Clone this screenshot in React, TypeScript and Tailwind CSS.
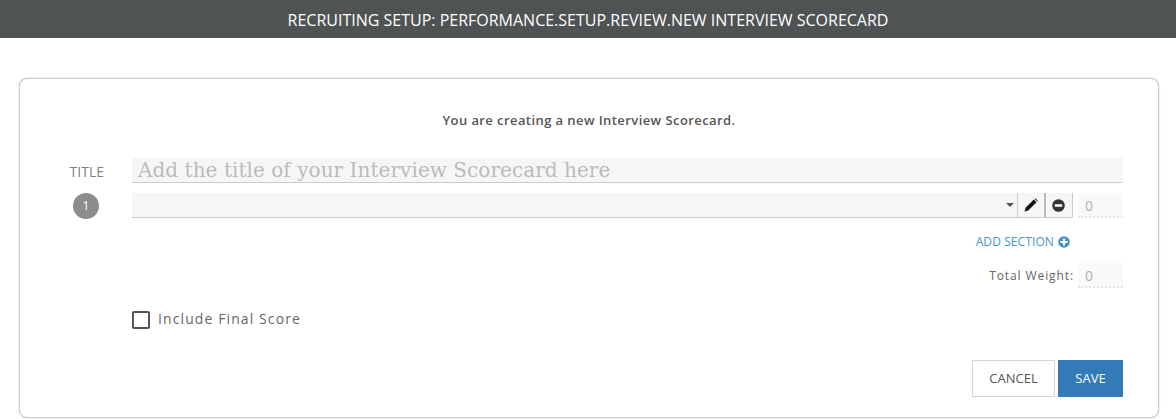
import React from "react";

const sans = "font-['Open_Sans',sans-serif]";

function NumberBox() {
  return (
    <div className={`w-[45px] h-[25px] bg-[#f9f9f9] border-b-2 border-dotted border-[#e6e6e6] pl-[7px] text-[14px] leading-[25px] text-[#b0b0b0] ${sans}`}>
      0
    </div>
  );
}

export default function App() {
  return (
    <div className={`w-[1176px] h-[419px] bg-white overflow-hidden ${sans}`}>
      <header className="h-[38px] bg-[#4f5354] flex items-center justify-center text-white text-[16px] pt-[1px]">
        RECRUITING SETUP: PERFORMANCE.SETUP.REVIEW.NEW INTERVIEW SCORECARD
      </header>
      <div className="mt-[40px] ml-[19px] w-[1140px] h-[340px] bg-white border border-[#c8c8c8] rounded-[8px] shadow-[0_0_2px_rgba(0,0,0,0.2)] pt-[32px] pr-[35px]">
        <p className="text-center text-[13px] leading-[18px] font-semibold tracking-[0.42px] text-[#555555] mr-[-35px]">
          You are creating a new Interview Scorecard.
        </p>
        <div className="mt-[29px] flex items-center">
          <div className="w-[112px] pr-[28px] text-right text-[14px] text-[#808080] pt-[2px]">TITLE</div>
          <div className="w-[991px] h-[25px] bg-[#f6f6f6] border-b border-[#cccccc] pl-[6px] font-['DejaVu_Serif',serif] text-[20px] tracking-[0.05px] leading-[24px] text-[#bbbbbb] whitespace-nowrap">
            Add the title of your Interview Scorecard here
          </div>
        </div>
        <div className="mt-[10px] flex items-start">
          <div className="w-[112px] flex justify-end pr-[33px]">
            <div className="w-[26px] h-[26px] rounded-full bg-[#8c8c8c] text-white text-[12px] flex items-center justify-center">1</div>
          </div>
          <div className="w-[941px] h-[25px] bg-[#f6f6f6] border-b border-[#cccccc] flex items-center justify-end">
            <div className="w-0 h-0 border-x-[4px] border-x-transparent border-t-[4px] border-t-[#555555] mr-[3px]" />
            <div className="w-[1px] h-[24px] bg-[#cccccc]" />
            <div className="w-[26px] h-[24px] flex items-center justify-center">
              <svg width="14" height="14" viewBox="0 0 14 14"><path d="M0.5 13.5 L1.5 9.8 L9.8 1.5 L12.5 4.2 L4.2 12.5 Z M10.6 0.7 L11.3 0.2 L13.8 2.7 L13.3 3.4 Z" fill="#111111" /></svg>
            </div>
            <div className="w-[2px] h-[24px] bg-[#bbbbbb]" />
            <div className="w-[26px] h-[24px] flex items-center justify-center pr-[2px]">
              <svg width="13" height="13" viewBox="0 0 13 13"><circle cx="6.5" cy="6.5" r="6.3" fill="#333333" /><rect x="2.8" y="5.2" width="7.4" height="2.6" rx="0.4" fill="#ffffff" /></svg>
            </div>
            <div className="w-[1px] h-[24px] bg-[#cccccc]" />
          </div>
          <div className="ml-[5px]"><NumberBox /></div>
        </div>
        <div className="mt-[15px] h-[16px] flex items-center justify-end pr-[53px] gap-[4px] text-[12px] tracking-[0.1px] text-[#4a94c8]">
          <span>ADD SECTION</span>
          <svg width="12" height="12" viewBox="0 0 12 12"><circle cx="6" cy="6" r="5.8" fill="#4a94c8" /><rect x="2.6" y="5" width="6.8" height="2" fill="#fff" /><rect x="5" y="2.6" width="2" height="6.8" fill="#fff" /></svg>
        </div>
        <div className="mt-[13px] flex items-center justify-end gap-[4px]">
          <span className="text-[12px] tracking-[0.9px] text-[#666666]">Total Weight:</span>
          <NumberBox />
        </div>
        <label className="mt-[20px] ml-[112px] flex items-center gap-[8px]">
          <span className="w-[18px] h-[18px] mt-[2px] border-2 border-[#555555] rounded-[2px] bg-white" />
          <span className="text-[14px] tracking-[1.1px] text-[#666666]">Include Final Score</span>
        </label>
        <div className="mt-[31px] flex justify-end gap-[3px]">
          <button className="w-[83px] h-[37px] bg-white border border-[#d5d5d5] text-[13px] text-[#555555]">CANCEL</button>
          <button className="w-[65px] h-[37px] bg-[#337ab7] text-[13px] text-white">SAVE</button>
        </div>
      </div>
    </div>
  );
}
